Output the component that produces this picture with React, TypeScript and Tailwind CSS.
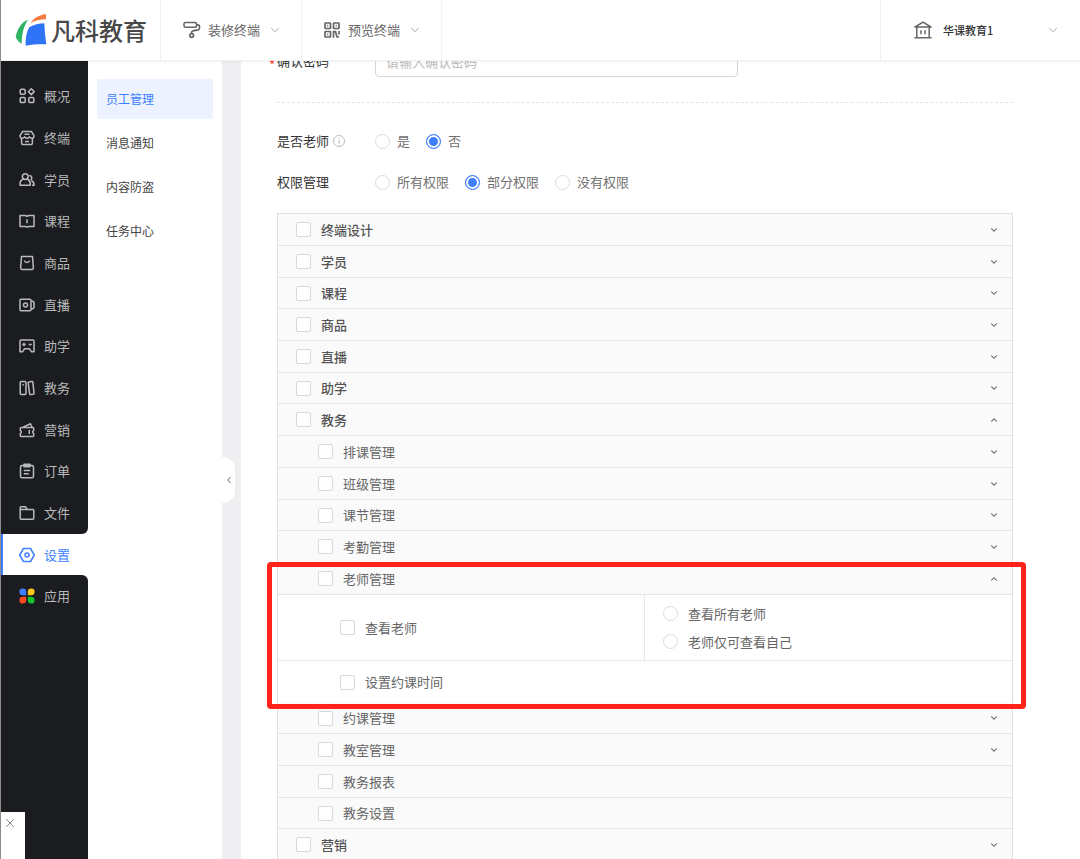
import React, { useState } from 'react';
import { ChevronDown, ChevronLeft, ChevronUp, X } from 'lucide-react';

type PermissionNode = {
  name: string;
  expandable?: boolean;
  marked?: boolean;
  children?: PermissionNode[];
};

const permissions: PermissionNode[] = [
  { name: '终端设计', expandable: true },
  { name: '学员', expandable: true },
  { name: '课程', expandable: true },
  { name: '商品', expandable: true },
  { name: '直播', expandable: true },
  { name: '助学', expandable: true },
  {
    name: '教务',
    expandable: true,
    children: [
      { name: '排课管理', expandable: true },
      { name: '班级管理', expandable: true },
      { name: '课节管理', expandable: true },
      { name: '考勤管理', expandable: true },
      { name: '老师管理', expandable: true, marked: true },
      { name: '约课管理', expandable: true },
      { name: '教室管理', expandable: true },
      { name: '教务报表' },
      { name: '教务设置' },
    ],
  },
  { name: '营销', expandable: true },
];

const iconShapes: Record<string, React.ReactNode> = {
  概况: (
    <>
      <rect x="1.2" y="1.2" width="5" height="5" rx="1.2" />
      <rect x="1.2" y="9.6" width="5" height="5" rx="1.2" />
      <rect x="9.8" y="9.6" width="5" height="5" rx="1.2" />
      <path d="M12.3 .8 15.2 3.7 12.3 6.6 9.4 3.7z" />
    </>
  ),
  终端: (
    <>
      <path d="M3.6 1.5h8.8l2.6 4.2c0 1.7-1 2.6-2.2 2.6-1 0-1.7-.5-2.4-1.4-.8.9-1.4 1.4-2.4 1.4s-1.6-.5-2.4-1.4c-.7.9-1.4 1.4-2.4 1.4C2 8.3 1 7.4 1 5.7z" />
      <path d="M2.6 8.5v4.7c0 .8.5 1.3 1.3 1.3h8.2c.8 0 1.3-.5 1.3-1.3V8.5M5.5 4.3h5M6 11.5h4" />
    </>
  ),
  学员: (
    <>
      <circle cx="6.3" cy="4.6" r="2.9" />
      <path d="M4.3 7C2.2 7.9 1 9.7 1 12v1.3h10.3V12c0-2.300-1.200-4.100-3-5M10.300 3.600a2.500 2.500 0 0 1 1.500 4.500M12.500 8.700c1.600.7 2.500 2 2.500 3.700v.9h-2" />
    </>
  ),
  课程: <path d="M1 2.500h5.300L8 3.300l1.700-.8H15v11H9.700L8 14l-1.700-.5H1zM8 6.300v4" />,
  商品: (
    <>
      <path d="M2.500 1.500h11l.9 11.600c0 .8-.5 1.400-1.300 1.400H2.900c-.8 0-1.300-.6-1.300-1.400z" />
      <path d="M5.300 5.500c.5 1.300 1.500 2 2.700 2s2.200-.7 2.700-2" />
    </>
  ),
  直播: (
    <>
      <rect x="1" y="2.300" width="11" height="11.400" rx="1" />
      <circle cx="6.500" cy="8" r="2" />
      <path d="M12.200 4.300H14L15 5.500v5l-1 1.200h-1.800" />
    </>
  ),
  助学: (
    <>
      <path d="M2 2h12c.6 0 1 .4 1 1v10.800h-2.500l-2-3h-5l-2 3H1V3c0-.6.400-1 1-1z" />
      <path d="M5 4.800v3.400M3.300 6.500h3.400M9.700 6.500h3" />
    </>
  ),
  教务: (
    <>
      <rect x="1.200" y="1.500" width="5.800" height="13" rx="1.200" />
      <path d="M4.100 4v1.500M10 2l2.800-.5c.6-.1 1 .2 1.100.8l1.100 10.800c.1.600-.2 1-.8 1.100l-2.500.3c-.6.100-1-.2-1.100-.8L9.200 3c-.1-.5.200-.9.800-1z" />
    </>
  ),
  营销: (
    <>
      <path d="M2.300 5.500h11.400c.6 0 1 .4 1 1v2a1.600 1.600 0 0 0 0 3v2c0 .6-.4 1-1 1H2.300c-.6 0-1-.4-1-1v-2a1.600 1.600 0 0 0 0-3v-2c0-.6.400-1 1-1zM10.300 8v4" />
      <path d="M4 5.200 11.500 1.700 13 5.200" />
    </>
  ),
  订单: (
    <>
      <rect x="1.500" y="2.500" width="13" height="12.300" rx="1.500" />
      <path d="M5 1.200h6v2.600H5zM4.800 7.500h6.400M4.800 10.800h5" />
    </>
  ),
  文件: (
    <path d="M1.200 5.500V2.700c0-.6.300-.9.900-.9h4.600l1.500 2.600h5.600c.6 0 1 .4 1 1v7.800c0 .6-.4 1-1 1H2.200c-.6 0-1-.4-1-1zM1.200 4.400h7" />
  ),
  设置: (
    <>
      <path d="M4.500 1.500h7L15.300 8l-3.800 6.500h-7L.7 8z" />
      <circle cx="8" cy="8" r="2" />
    </>
  ),
};

const mainNav = ['概况', '终端', '学员', '课程', '商品', '直播', '助学', '教务', '营销', '订单', '文件'];
const subNav = ['员工管理', '消息通知', '内容防盗', '任务中心'];

const checkboxClass =
  'm-0 size-[15px] shrink-0 appearance-none rounded-xs border border-[#d9d9d9] bg-white checked:border-[#3d7fff] checked:bg-[#3d7fff]';
const radioClass =
  'm-0 size-[15px] shrink-0 appearance-none rounded-full border border-[#dcdcdc] bg-white checked:border-[#3d7fff] checked:bg-[#3d7fff] checked:shadow-[inset_0_0_0_2px_white]';

function NavIcon({ name }: { name: string }) {
  return (
    <svg className="size-4 shrink-0" viewBox="0 0 16 16" fill="none" stroke="currentColor" strokeWidth="1.5" strokeLinejoin="round">
      {iconShapes[name]}
    </svg>
  );
}

function NavItem({ name, index }: { name: string; index: number }) {
  return (
    <a
      href="#"
      className={`flex items-center gap-[9px] pl-[18px] text-[#b9babc] ${index % 3 === 2 ? 'h-[41px]' : 'h-[42px]'}`}
    >
      <NavIcon name={name} />
      {name}
    </a>
  );
}

function Logo() {
  return (
    <a href="#" className="flex w-[160px] shrink-0 items-center gap-1 border-r border-[#f2f2f2] pl-[14px] text-[#484848]">
      <svg className="h-[34px] w-8 shrink-0" viewBox="45 38 96 102">
        <path d="M84 58C66 64 52 84 47 110c4 9 10 16 18 21 0-28 6-54 19-73z" fill="#2fb464" />
        <path d="M91 69c10-16 26-25 47-28v16c-18 0-34 4-47 12z" fill="#f47b42" />
        <path d="M77 136c-1-22 2-41 11-55 14-8 29-12 45-12 1 23 3 43 6 63-20-1-40 0-62 4z" fill="#2f73f6" />
      </svg>
      <span className="text-[24px] leading-8 font-medium whitespace-nowrap">凡科教育</span>
    </a>
  );
}

function TopBar() {
  return (
    <header className="z-20 flex h-[61px] shrink-0 border-b border-[#f0f0f0] bg-white text-[#666] shadow-[0_1px_3px_rgba(0,0,0,0.05)]">
      <Logo />
      <button type="button" className="flex w-[141px] shrink-0 items-center border-r border-[#f2f2f2] pl-[22px]">
        <svg className="mr-[7px] size-[18px]" viewBox="0 0 18 18" fill="none" stroke="currentColor" strokeWidth="1.6" strokeLinejoin="round">
          <rect x="1" y="1.500" width="12.500" height="4.800" rx="1.500" />
          <path d="M13.500 3.900h1.300c1 0 1.700.7 1.700 1.700v1.700c0 .8-.5 1.400-1.300 1.600l-5.500 1c-.7.200-1 .6-1 1.200v1.200" />
          <circle cx="8.700" cy="14.500" r="1.900" />
        </svg>
        装修终端
        <ChevronDown className="ml-2 size-3.5 text-[#999]" strokeWidth={1.5} />
      </button>
      <button type="button" className="flex w-[140px] shrink-0 items-center border-r border-[#f2f2f2] pl-[22px]">
        <svg className="mr-2 size-4" viewBox="0 0 16 16" fill="none" stroke="currentColor" strokeWidth="1.7">
          <rect x="1" y="1" width="5.500" height="5.500" rx=".6" />
          <rect x="9.500" y="1" width="5.500" height="5.500" rx=".6" />
          <rect x="1" y="9.500" width="5.500" height="5.500" rx=".6" />
          <path d="M9.500 15.800V9.700h2l1.500 5.300h2M15 9v3.500M3.200 3.700h1M11.700 3.700h1M3.200 12.300h1" />
        </svg>
        预览终端
        <ChevronDown className="ml-2 size-3.5 text-[#999]" strokeWidth={1.5} />
      </button>
      <button
        type="button"
        className="ml-auto flex w-[200px] shrink-0 items-center border-l border-[#f2f2f2] pr-5 pl-[33px] text-[11px] font-medium text-[#333]"
      >
        <svg className="mr-[11px] size-[18px] text-[#666]" viewBox="0 0 18 18" fill="none" stroke="currentColor" strokeWidth="1.500" strokeLinejoin="round">
          <path d="M1 6 9 1.200 17 6zM2.800 6v10.500M15.200 6v10.500M.500 16.700h17M7 9.300v4M11 9.300v4" />
        </svg>
        华课教育1
        <ChevronDown className="ml-auto size-3.5 text-[#999]" strokeWidth={1.5} />
      </button>
    </header>
  );
}

function SideBar() {
  return (
    <nav className="flex w-[87px] shrink-0 flex-col">
      <div className="rounded-br-md bg-[#1b1c1f] pt-[14px]">
        {mainNav.map((name, index) => (
          <NavItem key={name} name={name} index={index} />
        ))}
      </div>
      <a href="#" className="flex h-[41px] items-center gap-[9px] border-l-2 border-[#3d7fff] bg-white pl-4 text-[#3d7fff]">
        <NavIcon name="设置" />
        设置
      </a>
      <div className="relative flex-1 rounded-tr-md bg-[#1b1c1f]">
        <a href="#" className="flex h-[42px] items-center gap-[9px] pl-[18px] text-[#b9babc]">
          <svg className="size-4 shrink-0" viewBox="0 0 16 16">
            <path d="M3.700.500A3.300 3.300 0 0 1 7.200 3.700V7.200H3.700A3.300 3.300 0 0 1 3.700.500z" fill="#3d7fff" />
            <path d="M12.300.500a3.300 3.300 0 0 1 0 6.700H8.800V3.700A3.300 3.300 0 0 1 12.300.500z" fill="#ffc61a" />
            <path d="M3.700 8.800H7.200v3.500A3.400 3.400 0 1 1 3.700 8.800z" fill="#ff4a1c" />
            <path d="M8.800 8.800h3.500A3.400 3.400 0 1 1 8.800 12.300z" fill="#14c32b" />
          </svg>
          应用
        </a>
        <button
          type="button"
          aria-label="关闭"
          className="absolute bottom-0 left-0 flex h-[47px] w-6 items-start justify-center bg-white pt-1 pr-1.5 text-[#777]"
        >
          <X className="size-3.5" strokeWidth={1.5} />
        </button>
      </div>
    </nav>
  );
}

function SubMenu() {
  return (
    <nav className="flex w-[134px] shrink-0 flex-col gap-1 bg-white px-[9px] pt-[18px] text-[12px] text-[#444]">
      {subNav.map((name, index) => (
        <a
          key={name}
          href="#"
          className={`flex h-10 items-center rounded-xs pl-[9px] ${index === 0 ? 'bg-[#ecf2ff] text-[#3d7fff]' : ''}`}
        >
          {name}
        </a>
      ))}
    </nav>
  );
}

function RadioRow({ label, name, options, initial, hint }: {
  label: string;
  name: string;
  options: string[];
  initial: string;
  hint?: boolean;
}) {
  const [value, setValue] = useState(initial);

  return (
    <fieldset className="flex h-5 items-center">
      <legend className="float-left flex w-[98px] items-center gap-1 text-[#333]">
        {label}
        {hint && (
          <svg className="size-3 text-[#bbb]" viewBox="0 0 12 12" fill="none" stroke="currentColor">
            <circle cx="6" cy="6" r="5.500" />
            <path d="M6 5v4M6 3v1" />
          </svg>
        )}
      </legend>
      <div className="flex gap-4 text-[#707070]">
        {options.map((option) => (
          <label key={option} className="flex items-center gap-[7px]">
            <input
              type="radio"
              name={name}
              className={radioClass}
              checked={value === option}
              onChange={() => setValue(option)}
            />
            {option}
          </label>
        ))}
      </div>
    </fieldset>
  );
}

function TeacherDetail() {
  return (
    <div className="bg-white text-[#666]">
      <div className="grid h-[66px] grid-cols-2 border-b border-[#e8e8e8]">
        <label className="flex items-center gap-2.5 border-r border-[#e8e8e8] pl-[62px]">
          <input type="checkbox" className={checkboxClass} />
          查看老师
        </label>
        <div className="flex flex-col justify-center gap-2 pl-[18px]">
          {['查看所有老师', '老师仅可查看自己'].map((scope) => (
            <label key={scope} className="flex items-center gap-2.5">
              <input type="radio" name="teacher-scope" className={radioClass} />
              {scope}
            </label>
          ))}
        </div>
      </div>
      <label className="flex h-[42px] items-center gap-2.5 pl-[62px]">
        <input type="checkbox" className={checkboxClass} />
        设置约课时间
      </label>
    </div>
  );
}

function PermissionItem({ node, index, nested }: { node: PermissionNode; index: number; nested?: boolean }) {
  const isOpen = Boolean(node.children || node.marked);
  const Arrow = isOpen ? ChevronUp : ChevronDown;

  return (
    <li className="relative">
      <div
        className={`flex items-center justify-between border-b border-[#e5e5e5] bg-[#fafafa] pr-[13px] ${
          index % 3 === 2 ? 'h-[31px]' : 'h-8'
        } ${nested ? 'pl-10 text-[#666]' : 'pl-[18px] font-medium text-[#555]'}`}
      >
        <label className="flex items-center gap-2.5">
          <input type="checkbox" className={checkboxClass} />
          {node.name}
        </label>
        {node.expandable && (
          <button type="button" aria-label={isOpen ? '收起' : '展开'} aria-expanded={isOpen} className="text-[#555]">
            <Arrow className="size-2.5" strokeWidth={2.5} />
          </button>
        )}
      </div>
      {node.marked && (
        <>
          <TeacherDetail />
          <div className="pointer-events-none absolute -top-px -right-[14px] -bottom-[6px] -left-[11px] z-10 rounded-sm border-[5px] border-[#ff2318]" />
        </>
      )}
      {node.children && (
        <ul>
          {node.children.map((child, childIndex) => (
            <PermissionItem key={child.name} node={child} index={childIndex} nested />
          ))}
        </ul>
      )}
    </li>
  );
}

function StaffForm() {
  return (
    <form className="-mt-4 pr-[67px] pl-7">
      <div className="flex h-8 items-center">
        <label htmlFor="confirm-password" className="flex w-[106px] shrink-0 items-center text-[#333]">
          <span className="w-2 pt-2 text-[#f33]">*</span>
          确认密码
        </label>
        <input
          id="confirm-password"
          type="password"
          placeholder="请输入确认密码"
          className="h-full w-[363px] rounded-sm border border-[#d5d5d5] px-2.5 placeholder:text-[#bbb]"
        />
      </div>
      <div className="pl-2">
        <hr className="mt-[25px] mb-7 border-dashed border-[#e5e5e5]" />
        <div className="flex flex-col gap-[21px]">
          <RadioRow label="是否老师" name="is-teacher" options={['是', '否']} initial="否" hint />
          <RadioRow
            label="权限管理"
            name="permission"
            options={['所有权限', '部分权限', '没有权限']}
            initial="部分权限"
          />
        </div>
        <ul className="mt-[21px] border border-[#e0e0e0]">
          {permissions.map((node, index) => (
            <PermissionItem key={node.name} node={node} index={index} />
          ))}
        </ul>
      </div>
    </form>
  );
}

export default function App() {
  return (
    <div className="flex h-screen flex-col overflow-hidden border-l border-[#8c8c8c] bg-[#efeff1] font-['Noto_Sans_CJK_SC',sans-serif] text-[13px] leading-5">
      <TopBar />
      <div className="flex min-h-0 flex-1">
        <div className="flex shrink-0 bg-white">
          <SideBar />
          <SubMenu />
        </div>
        <div className="relative w-[19px] shrink-0">
          <button
            type="button"
            aria-label="收起菜单"
            className="absolute top-[396px] left-0 flex h-[46px] w-[13px] items-center justify-center rounded-r-xl bg-white text-[#777]"
          >
            <ChevronLeft className="size-2.5" strokeWidth={2.5} />
          </button>
        </div>
        <main className="min-w-0 flex-1 overflow-hidden bg-white">
          <StaffForm />
        </main>
      </div>
    </div>
  );
}
